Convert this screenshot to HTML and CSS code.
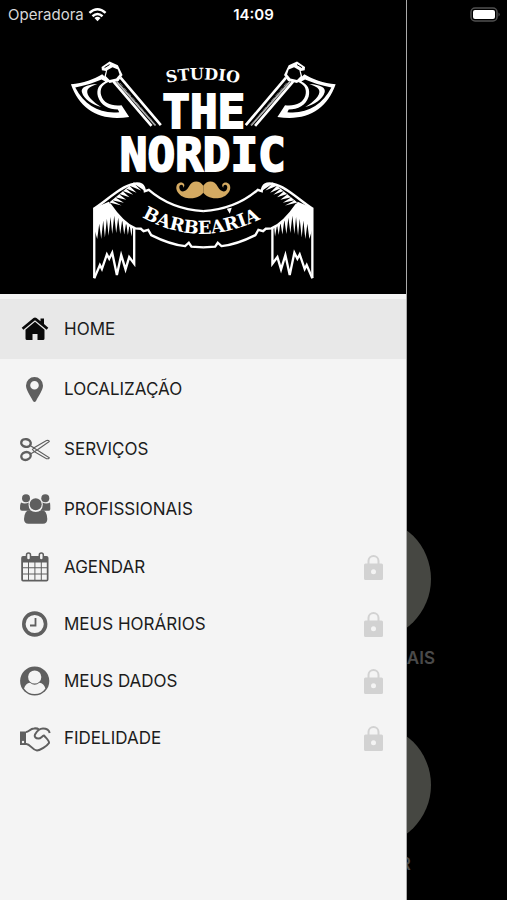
FILE: index.html
```html
<!DOCTYPE html>
<html lang="pt-BR">
<head>
<meta charset="utf-8">
<meta name="viewport" content="width=device-width, initial-scale=1">
<title>The Nordic Barbearia</title>
<link rel="stylesheet" href="styles.css">
</head>
<body>
<div class="app">
  <header class="status">
    <span class="carrier">Operadora
      <svg class="wifi" viewBox="0 0 20 15" aria-hidden="true"><g fill="none" stroke="#fff" stroke-width="2.6"><path d="M1.500 5.800Q10-1.800 18.500 5.800"/><path d="M4.700 9.300Q10 4.500 15.300 9.300"/></g><path d="M6.800 11.300Q10 8.600 13.200 11.300L10 14.500Z" fill="#fff"/></svg>
    </span>
    <time class="clock">14:09</time>
    <svg class="battery" viewBox="0 0 31 15" aria-hidden="true"><rect x="1" y="1" width="26" height="13" rx="4" fill="none" stroke="#505050" stroke-width="1.500"/><rect x="3" y="3" width="22" height="9" rx="2" fill="#fff"/><path d="M28.500 5.500Q31 7.500 28.500 9.500Z" fill="#505050"/></svg>
  </header>

  <main class="page">
    <a class="tile" href="#profissionais"><span class="disc"></span>PROFISSIONAIS</a>
    <a class="tile" href="#agendar"><span class="disc"></span>AGENDAR</a>
  </main>

  <aside class="drawer">
    <svg class="logo" viewBox="0 0 406 294" role="img" aria-label="Studio The Nordic Barbearia">
      <defs>
        <path id="arc-studio" d="M167 83Q203.500 76 242 84"/>
        <path id="arc-barbearia" d="M142 217Q204 253 272 213"/>
        <g id="axe" transform="translate(60 55) scale(.3333)">
          <path d="M33 88C70 85 103 73 127 58L150 80C128 86 118 103 124 122C132 146 154 154 185 151L208 186C120 200 60 165 33 88Z" fill="#fff"/>
          <path d="M46 98C78 92 102 84 125 74L136 80C116 90 109 104 114 125C122 151 146 164 174 164L178 172C120 178 74 152 46 98Z" fill="#000"/>
          <path d="M112 87C78 89 62 98 66 112C72 134 98 150 124 156C98 140 80 122 82 108C84 98 96 93 112 87Z" fill="#fff"/>
          <path d="M182 68L303 211M161 80L275 213" fill="none" stroke="#fff" stroke-width="8"/>
          <path d="M170 80L287 212" fill="none" stroke="#bbb" stroke-width="5"/>
          <path d="M180 84L289 212" fill="none" stroke="#777" stroke-width="3" stroke-dasharray="14 5"/>
          <path d="M125 36L149 20L174 31L188 60L176 78L149 84L132 70L138 48L126 46Z" fill="#fff"/>
          <path d="M142 46L158 37L174 44L179 59L169 71L149 75L138 64Z" fill="#000"/>
          <path d="M134 38L149 29" stroke="#000" stroke-width="3"/>
        </g>
        <g id="ribbon" transform="translate(85 170) scale(.3333)">
          <path d="M28 325V116C62 96 108 48 146 42C167 38 178 45 180 64L192 60C238 100 292 120 356 124" fill="none" stroke="#fff" stroke-width="7"/>
          <path d="M74 102C100 140 128 166 151 176L168 177L176 184L190 180L199 196C235 214 270 226 301 229L312 219L320 231L356 233" fill="none" stroke="#fff" stroke-width="7"/>
          <path d="M27 115L72 96C88 130 118 160 149 176V184L143 170L140 200L134 165L129 196L124 158L118 194L112 150L106 193L100 144L94 190L88 138L82 193L77 142L71 198L66 147L60 203L55 152L49 208L43 162L37 208L28 178Z" fill="#fff"/>
          <path d="M73 98L110 107L81 91L117 99L91 82L124 90L101 72L134 82L112 63L145 75L122 55L155 69L134 48L169 62L150 43L178 62L174 44L146 38Z" fill="#fff"/>
          <path d="M28 326L45 286L51 298L66 254L73 267L82 249L96 316L109 256L122 299L133 262L148 282V174" fill="none" stroke="#fff" stroke-width="7"/>
        </g>
        <path id="whisker" d="M203.500 186C200 180 192 180 189 187C186 193 180 193 179.500 188C179 184 184 184 183.500 188C187 184 181 180.500 177.500 184.500C174 190 180 198 189 198.500C197 199 201 196 203.500 193Z" fill="#d4aa62"/>
      </defs>
      <use href="#axe"/>
      <use href="#axe" transform="translate(407 0) scale(-1 1)"/>
      <text class="logo-small logo-top"><textPath href="#arc-studio">STUDIO</textPath></text>
      <text class="logo-big" x="204" y="128" text-anchor="middle">THE</text>
      <text class="logo-big" x="203" y="171" text-anchor="middle">NORDIC</text>
      <use href="#whisker"/>
      <use href="#whisker" transform="translate(407 0) scale(-1 1)"/>
      <use href="#ribbon"/>
      <use href="#ribbon" transform="translate(407 0) scale(-1 1)"/>
      <path d="M227 209L230 214L232 208Z" fill="#fff"/>
      <text class="logo-small logo-ribbon"><textPath href="#arc-barbearia">BARBEARIA</textPath></text>
    </svg>

    <nav class="menu">
      <a class="item active" href="#home">
        <svg class="icon" viewBox="0 0 30 30" aria-hidden="true"><path d="M20.500 4.500H24V10L28.300 13.800L26.600 15.800L15 6.200L3.400 15.800L1.700 13.800L13.500 4Q15 2.800 16.500 4L20.500 7.300Z"/><path d="M15 7.800L24.500 15.700V24.500Q24.500 26 23 26H17.500V20H12.500V26H7Q5.500 26 5.500 24.500V15.700Z"/></svg>
        <span class="label">HOME</span>
      </a>
      <a class="item" href="#localizacao">
        <svg class="icon" viewBox="0 0 30 30" aria-hidden="true"><path fill-rule="evenodd" d="M14.500 3A8.500 8.500 0 0 1 23 11.500C23 16 19 21 16 27Q14.500 29 13 27C10 21 6 16 6 11.500A8.500 8.500 0 0 1 14.500 3ZM14.500 7A4.300 4.300 0 1 0 14.500 15.600A4.300 4.300 0 1 0 14.500 7Z"/></svg>
        <span class="label">LOCALIZAÇÃO</span>
      </a>
      <a class="item" href="#servicos">
        <svg class="icon" viewBox="0 0 30 30" aria-hidden="true"><g fill="none" stroke="currentColor"><ellipse cx="6" cy="9" rx="4.800" ry="3.800" stroke-width="2.400" transform="rotate(12 6 9)"/><ellipse cx="6" cy="22" rx="4.800" ry="3.800" stroke-width="2.400" transform="rotate(-20 6 22)"/><path d="M10 11.500L14 13.800L26.500 6.500Q29 6 29.300 7.500L17.500 15.800L10.500 20M10 11.500L17.500 16.200L29.300 23.700Q29 25.200 26.500 24.700L14.500 17.800M14 13.800L12.500 15.500L14.500 17.800" stroke-width="1.100"/></g></svg>
        <span class="label">SERVIÇOS</span>
      </a>
      <a class="item" href="#profissionais">
        <svg class="icon" viewBox="0 0 30 30" aria-hidden="true"><circle cx="6" cy="4.200" r="4"/><circle cx="25.300" cy="4.200" r="4"/><path d="M1 8.500Q5 10.500 8.800 8.500Q7.800 13 10.500 16L8 16.800H2Q0 16.800 0 14.500Q0 10 1 8.500ZM30 8.500Q26.500 10.500 22.500 8.500Q23.500 13 20.800 16L23.500 16.800H28.500Q30.500 16.800 30.300 14.500Q30.300 10 30 8.500Z"/><circle cx="15.700" cy="10.300" r="6"/><path d="M10 16Q15.700 20 21.400 16Q27 16 27.300 25Q27.300 29.800 23 29.800H8.500Q4 29.800 4 25Q4.500 16 10 16Z"/></svg>
        <span class="label">PROFISSIONAIS</span>
      </a>
      <a class="item locked" href="#agendar">
        <svg class="icon" viewBox="0 0 30 30" aria-hidden="true"><path fill-rule="evenodd" d="M3 4H26.500Q28.500 4 28.500 6V27.500Q28.500 29.500 26.500 29.500H3Q1.200 29.500 1.200 27.500V6Q1.200 4 3 4ZM3 10.500V15.200H8V10.500ZM9 10.500V15.200H14.400V10.500ZM15.400 10.500V15.200H20.800V10.500ZM21.800 10.500V15.200H26.800V10.500ZM3 16.300V21.500H8V16.300ZM9 16.300V21.500H14.400V16.300ZM15.400 16.300V21.500H20.800V16.300ZM21.800 16.300V21.500H26.800V16.300ZM3 22.600V27.800H8V22.600ZM9 22.600V27.800H14.400V22.600ZM15.400 22.600V27.800H20.800V22.600ZM21.800 22.600V27.800H26.800V22.600Z"/><g fill="#f4f4f4" stroke="currentColor" stroke-width="1.500"><rect x="6.500" y="1" width="4" height="7" rx="2"/><rect x="19.300" y="1" width="4" height="7" rx="2"/></g></svg>
        <span class="label">AGENDAR</span>
        <svg class="lock" viewBox="0 0 19 25" aria-hidden="true"><use href="#padlock"/></svg>
      </a>
      <a class="item locked" href="#horarios">
        <svg class="icon" viewBox="0 0 30 30" aria-hidden="true"><g fill="none" stroke="currentColor"><circle cx="14.700" cy="15" r="10.900" stroke-width="3.600"/><path d="M15.500 9V16.500H10" stroke-width="1.800"/></g></svg>
        <span class="label">MEUS HORÁRIOS</span>
        <svg class="lock" viewBox="0 0 19 25" aria-hidden="true"><use href="#padlock"/></svg>
      </a>
      <a class="item locked" href="#dados">
        <svg class="icon" viewBox="0 0 30 30" aria-hidden="true"><circle cx="14.700" cy="15" r="14.600"/><path d="M4 22.500Q5.500 17.500 10 16.800Q14.700 20.500 19.400 16.800Q24 17.500 25.400 22.500Q21.500 28 14.700 28Q8 28 4 22.500Z" fill="#f4f4f4"/><circle cx="14.700" cy="11" r="6.600" fill="#f4f4f4"/></svg>
        <span class="label">MEUS DADOS</span>
        <svg class="lock" viewBox="0 0 19 25" aria-hidden="true"><use href="#padlock"/></svg>
      </a>
      <a class="item locked" href="#fidelidade">
        <svg class="icon" viewBox="0 0 30 30" aria-hidden="true"><path fill-rule="evenodd" d="M0 8.500H6V22H0ZM3 17.800A1.200 1.200 0 1 0 3 20.200A1.200 1.200 0 1 0 3 17.800Z"/><path d="M6 9C9 9 10 5.500 14 5.500Q17 5 19 6.500M6 21C10 20.500 12 27 17 27.500C20 27.500 27 23 29 20C29.500 18 27 16 24 12.500C22 13 21 15.500 18.500 15.500C15.500 15.500 14 13.500 15 11.500C17 8 20 5.500 23 5.500C27 5.500 29 7 29.700 10" fill="none" stroke="currentColor" stroke-width="2" stroke-linejoin="round"/></svg>
        <span class="label">FIDELIDADE</span>
        <svg class="lock" viewBox="0 0 19 25" aria-hidden="true"><g id="padlock"><path d="M4.500 10V6A5 5 0 0 1 14.500 6V10" fill="none" stroke="currentColor" stroke-width="2"/><path fill-rule="evenodd" d="M1.500 8.500H17.500Q19 8.500 19 10V23.500Q19 25 17.500 25H1.500Q0 25 0 23.500V10Q0 8.500 1.500 8.500ZM9.500 14.200A2.500 2.500 0 1 0 9.500 19.200A2.500 2.500 0 1 0 9.500 14.200Z"/></g></svg>
      </a>
    </nav>
  </aside>
</div>
</body>
</html>
```

FILE: styles.css
```css
* { box-sizing: border-box; }

body {
  margin: 0;
  background: #000;
  font-family: Inter, "Liberation Sans", sans-serif;
}

a { color: inherit; text-decoration: none; }
svg { display: block; }

.app {
  position: relative;
  min-height: 100vh;
  overflow: hidden;
}

.status {
  position: absolute;
  inset: 0 0 auto;
  z-index: 2;
  display: grid;
  grid-template-columns: 1fr auto 1fr;
  align-items: center;
  height: 28px;
  padding: 0 6px;
  color: #fff;
  font-size: 15px;
}

.carrier {
  display: flex;
  align-items: center;
  gap: 4px;
  padding-left: 2px;
  color: #d8d8d8;
}

.wifi { width: 19px; height: 15px; }
.clock { font-weight: 600; }
.battery { width: 31px; height: 15px; justify-self: end; }

/* Dimmed home screen behind the drawer */
.page {
  display: grid;
  justify-content: end;
  align-content: start;
  gap: 40px;
  padding: 518px 72px 0 0;
  height: 100vh;
  overflow: hidden;
}

.tile {
  display: flex;
  flex-direction: column;
  align-items: center;
  gap: 8px;
  height: 166px;
  color: #4a4a4a;
  font-size: 17px;
  font-weight: 600;
  line-height: 20px;
}

.disc {
  width: 122px;
  height: 122px;
  flex: none;
  border-radius: 50%;
  background: #464742;
}

.drawer {
  position: absolute;
  inset: 0 auto 0 0;
  width: calc(80% + 1px);
  background: #f4f4f4;
  border-right: 1px solid #aaa;
}

.logo {
  width: 100%;
  background: #000;
}

.logo-small {
  fill: #fff;
  font-family: "DejaVu Serif", serif;
  font-weight: bold;
}

.logo-top { font-size: 16px; }
.logo-ribbon { font-size: 18px; }

.logo-big {
  fill: #fff;
  stroke: #fff;
  stroke-width: 2px;
  font: bold 46px "DejaVu Sans Mono", monospace;
}

.menu { padding-top: 5px; }

.item {
  display: flex;
  align-items: center;
  gap: 14px;
  height: 60px;
  padding: 0 23px 0 20px;
  color: #5f5f5f;
}

.item.locked { height: 57px; }
.item.active { background: #e8e8e8; color: #0a0a0a; }

.icon {
  width: 30px;
  height: 30px;
  flex: none;
  fill: currentColor;
  overflow: visible;
}

.label {
  flex: 1;
  color: #1c1c1c;
  font-size: 17px;
  line-height: 24px;
}

.lock {
  width: 19px;
  height: 25px;
  color: #d2d2d2;
  fill: currentColor;
}
```
